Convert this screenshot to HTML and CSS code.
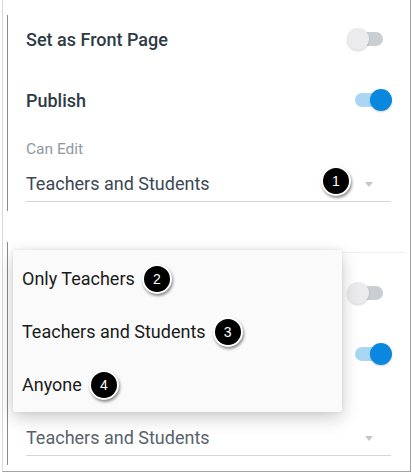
FILE: index.html
```html
<!DOCTYPE html>
<html lang="en">
<head>
	<meta charset="UTF-8">
	<title>Page Options</title>
	<link rel="stylesheet" href="styles.css">
</head>
<body>
	<div class="frame">
		<div class="panel">
			<div class="row">
				<span class="row-title">Set as Front Page</span>
				<span class="switch"><span class="track"></span><span class="thumb"></span></span>
			</div>
			<div class="row row-gap">
				<span class="row-title">Publish</span>
				<span class="switch on"><span class="track"></span><span class="thumb"></span></span>
			</div>
			<div class="field-label">Can Edit</div>
			<div class="select">
				<span>Teachers and Students</span>
				<span class="caret"></span>
				<span class="badge badge-select">1</span>
			</div>
		</div>

		<!-- same form, shown with the menu open over it -->
		<div class="panel second">
			<div class="divider"></div>
			<div class="row">
				<span class="row-title covered">Set as Front Page</span>
				<span class="switch"><span class="track"></span><span class="thumb"></span></span>
			</div>
			<div class="row row-gap">
				<span class="row-title covered">Publish</span>
				<span class="switch on"><span class="track"></span><span class="thumb"></span></span>
			</div>
			<div class="field-label covered">Can Edit</div>
			<div class="select">
				<span>Teachers and Students</span>
				<span class="caret"></span>
			</div>
		</div>

		<ul class="menu">
			<li class="menu-item">Only Teachers <span class="badge">2</span></li>
			<li class="menu-item">Teachers and Students <span class="badge">3</span></li>
			<li class="menu-item">Anyone <span class="badge">4</span></li>
		</ul>
	</div>
</body>
</html>
```

FILE: styles.css
```css
/*--reset--*/
ul {
	margin: 0;
	padding: 0;
	list-style: none;
}
body {
	margin: 0;
	width: 412px;
	height: 474px;
	background: #fff;
	font-family: Roboto, "Noto Sans", sans-serif;
	color: #2d3b45;
	overflow: hidden;
}

/**
 * screenshot frame
 */
.frame {
	position: relative;
	width: 407px;
	height: 456px;
	margin-left: 2px;
	padding-top: 15px;
	border-left: 1px solid #dadada;
	border-right: 1px solid #a3a3a3;
	border-bottom: 1px solid #a3a3a3;
}
.panel {
	width: 366px;
	margin-left: 4px;
	padding: 0 0 9px 18px;
	border-left: 1px solid #8a8a8a;
}
.panel.second {
	margin-top: 31px;
	padding-top: 10px;
}
.divider {
	height: 1px;
	margin: 0 -13px 16px 0;
	background: #efeff1;
}
.covered {
	visibility: hidden;
}

/**
 * rows and switches
 */
.row {
	display: flex;
	justify-content: space-between;
	align-items: center;
	height: 48px;
}
.row-gap {
	margin-top: 13px;
}
.row-title {
	font-size: 18px;
	font-weight: 500;
}
.switch {
	position: relative;
	width: 45px;
	height: 24px;
}
.switch .track {
	position: absolute;
	left: 8px;
	top: 5px;
	width: 28px;
	height: 14px;
	border-radius: 7px;
	background: #c9ced3;
}
.switch .thumb {
	position: absolute;
	left: 0;
	top: 1px;
	width: 22px;
	height: 22px;
	border-radius: 50%;
	background: #ebebee;
	box-shadow: 0 1px 2px rgba(0, 0, 0, .18);
}
.switch.on .track {
	background: #a9d6f3;
}
.switch.on .thumb {
	left: auto;
	right: 0;
	background: #0a87de;
}

/**
 * select field
 */
.field-label {
	margin-top: 15px;
	font-size: 15.5px;
	line-height: 20px;
	color: #8f99a1;
}
.select {
	position: relative;
	display: flex;
	align-items: center;
	margin-right: 1px;
	padding: 13px 0 5px;
	font-size: 18px;
	line-height: 24px;
	color: #3b4853;
	border-bottom: 1px solid #d3d7dc;
}
.second .select {
	color: #58636c;
}
.caret {
	margin: 0 18px 0 auto;
	border-left: 4px solid transparent;
	border-right: 4px solid transparent;
	border-top: 5px solid #c3c8cd;
}

/**
 * dropdown menu
 */
.menu {
	position: absolute;
	left: 10px;
	top: 250px;
	width: 329px;
	padding: 2px 0 1px;
	background: #fafafa;
	border-radius: 2px;
	box-shadow: 0 6px 18px rgba(0, 0, 0, .2), 0 0 4px rgba(0, 0, 0, .08);
}
.menu-item {
	display: flex;
	align-items: center;
	gap: 7px;
	height: 53px;
	padding-left: 9px;
	font-size: 18px;
	color: #1a1a1a;
}

/**
 * step badges
 */
.badge {
	display: inline-flex;
	justify-content: center;
	align-items: center;
	width: 26px;
	height: 26px;
	border: 2px solid #fff;
	border-radius: 50%;
	background: #000;
	color: #fff;
	font: 14px "Liberation Sans", Arial, sans-serif;
	box-shadow: 1px 2px 3px rgba(0, 0, 0, .45);
}
.badge-select {
	position: absolute;
	right: 40px;
	top: 7px;
}
```
